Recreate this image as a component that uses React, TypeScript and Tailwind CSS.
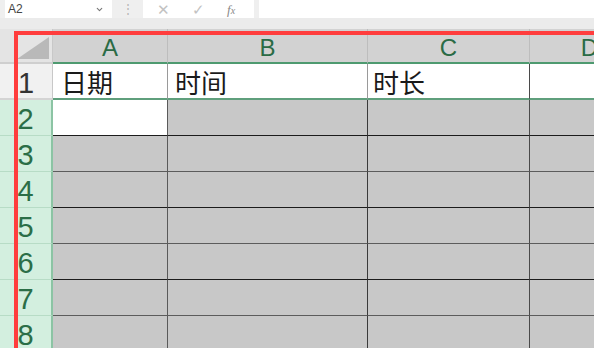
import { ChevronDown } from 'lucide-react'

const COLS = [
  { key: 'A', w: 'w-[115px]', line: 'border-r-[#5a5a5a]', title: '日期', pad: 'pl-[8px]' },
  { key: 'B', w: 'w-[200px]', line: 'border-r-[#3a3a3a]', title: '时间', pad: 'pl-[7px]' },
  { key: 'C', w: 'w-[162px]', line: 'border-r-[#4a4a4a]', title: '时长', pad: 'pl-[5px]' },
  { key: 'D', w: 'w-[120px]', line: 'border-r-[#4a4a4a]', title: '', pad: 'pl-[5px]' },
]

// dark / medium grid lines alternate down the selection
const ROWS = [2, 3, 4, 5, 6, 7, 8]

function Toolbar() {
  return (
    <div className="h-[18px] flex items-stretch bg-[#efefef] flex-shrink-0">
      <div className="ml-[5px] w-[107px] flex-shrink-0 bg-white flex items-center justify-between pl-[3px] pr-[8px]">
        <span className="text-[12px] text-[#444] leading-none">A2</span>
        <ChevronDown className="w-[9px] h-[9px] text-[#777]" strokeWidth={3} />
      </div>
      <div className="w-[31px] flex-shrink-0 flex items-center justify-center text-[#b5b5b5] text-[12px] leading-none">⋮</div>
      <div className="w-[111px] flex-shrink-0 bg-white flex items-center text-[#c2c2c2] leading-none">
        <span className="ml-[14px] text-[15px]">✕</span>
        <span className="ml-[22px] text-[15px]">✓</span>
        <span className="ml-[22px] text-[13px] italic font-['Liberation_Serif'] text-[#888]">
          f<span className="text-[10px]">x</span>
        </span>
      </div>
      <div className="ml-[5px] flex-1 bg-white" />
    </div>
  )
}

function HeaderRow() {
  return (
    <div className="h-[35px] flex flex-shrink-0">
      <div className="w-[53px] flex-shrink-0 bg-[#e4e4e4] border-r border-[#c8c8c8] border-b-2 border-b-[#cfcfcf] flex items-end justify-end pr-[3px] pb-[3px]">
        <svg width="32" height="22" viewBox="0 0 32 22">
          <polygon points="32,0 32,22 0,22" fill="#b9b9b9" />
        </svg>
      </div>
      {COLS.map((c) => (
        <div
          key={c.key}
          className={`${c.w} flex-shrink-0 bg-[#d2d2d2] border-r border-r-[#bdbdbd] border-b-2 border-b-[#4e9a70] flex items-center justify-center pt-[4px] text-[24px] leading-none text-[#2a6b45]`}
        >
          {c.key}
        </div>
      ))}
    </div>
  )
}

function FirstRow() {
  return (
    <div className="h-[36px] flex flex-shrink-0">
      <div className="w-[53px] flex-shrink-0 bg-[#f1f1f1] border-r border-[#c8c8c8] border-b-2 border-b-[#d4d4d4] flex items-center justify-center pt-[4px] text-[29px] leading-none text-[#333]">
        1
      </div>
      {COLS.map((c) => (
        <div
          key={c.key}
          className={`${c.w} flex-shrink-0 bg-white border-r ${c.key === 'A' || c.key === 'B' ? 'border-r-[#9a9a9a]' : c.line} border-b-2 border-b-[#5f9f7c] flex items-center ${c.pad} pt-[2px] text-[26px] leading-none text-[#1a1a1a] font-['Noto_Sans_CJK_SC',sans-serif]`}
        >
          {c.title}
        </div>
      ))}
    </div>
  )
}

function DataRow({ n }: { n: number }) {
  const dark = n % 2 === 0
  const bottom = dark ? 'border-b-[#1c1c1c]' : 'border-b-[#5c5c5c]'
  return (
    <div className="h-[36px] flex flex-shrink-0">
      <div className="w-[53px] flex-shrink-0 bg-[#d3efdf] border-r-2 border-r-[#8cc4a4] border-b border-b-[#b7dcc6] flex items-center justify-center pt-[4px] text-[29px] leading-none text-[#2b6e47]">
        {n}
      </div>
      {COLS.map((c) => {
        const active = n === 2 && c.key === 'A'
        return (
          <div
            key={c.key}
            className={`${c.w} flex-shrink-0 border-r ${c.line} border-b ${bottom} ${
              active ? 'bg-white border-r-[#5a5a5a]' : 'bg-[#c8c8c8]'
            }`}
          />
        )
      })}
    </div>
  )
}

export default function App() {
  return (
    <div className="relative w-[594px] h-[348px] overflow-hidden bg-[#ededed] font-['Liberation_Sans',sans-serif] flex flex-col">
      <Toolbar />
      <div className="h-[11px] bg-[#ebebeb] flex-shrink-0" />
      <HeaderRow />
      <FirstRow />
      {ROWS.map((n) => (
        <DataRow key={n} n={n} />
      ))}

      {/* red annotation frame drawn over the sheet */}
      <div className="absolute left-[14px] top-[31px] w-[620px] h-[400px] border-[4px] border-[#ff3d3d] pointer-events-none" />
    </div>
  )
}
